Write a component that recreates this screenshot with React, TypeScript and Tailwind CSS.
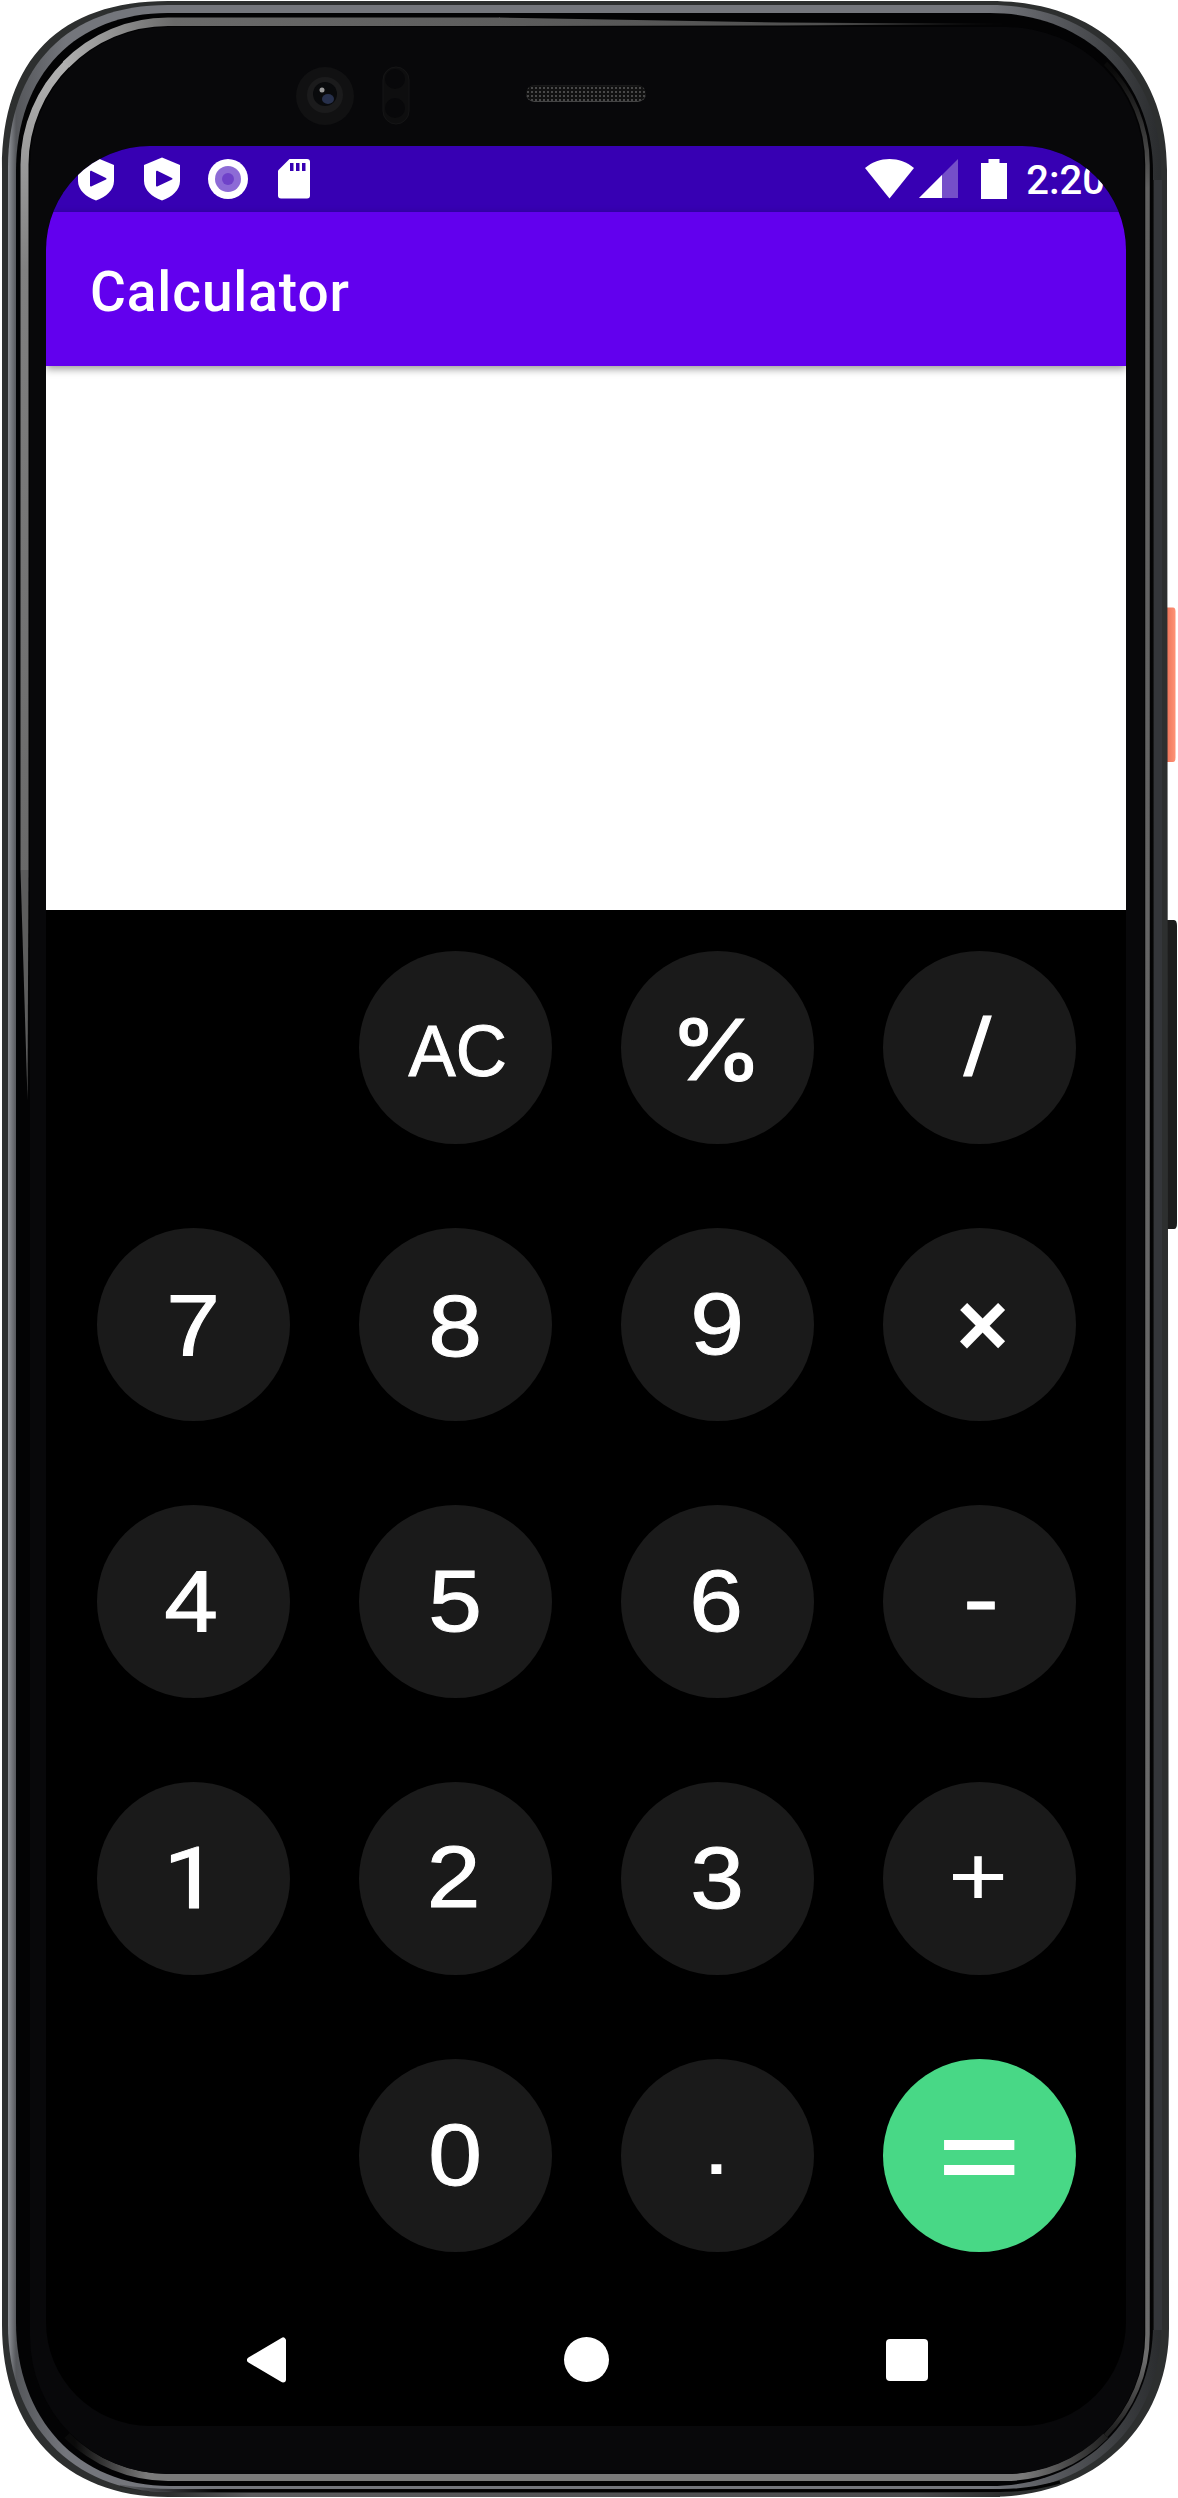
type Key = { label: string; look: string; green?: boolean };

const digit = "text-[87px] scale-x-[1.11] [-webkit-text-stroke:1px_white]";

const keys: (Key | null)[] = [
  null,
  { label: "AC", look: "text-[73px] scale-x-[0.97] translate-x-[2px] translate-y-[3px] [-webkit-text-stroke:1px_white]" },
  { label: "%", look: "font-['Inter'] text-[84px] scale-x-[1.14] translate-x-[-1px] translate-y-[2px] [-webkit-text-stroke:1px_white]" },
  { label: "/", look: "text-[82px] scale-x-[1.2] translate-x-[-2px] translate-y-[-1px] [-webkit-text-stroke:1px_white]" },
  { label: "7", look: `${digit} translate-y-[1px]` },
  { label: "8", look: `${digit} translate-y-[1px]` },
  { label: "9", look: `${digit} translate-y-[-1px]` },
  { label: "×", look: "text-[90px] font-bold translate-x-[3px]" },
  { label: "4", look: `${digit} translate-x-[-2px]` },
  { label: "5", look: `${digit} translate-y-[-1.5px]` },
  { label: "6", look: `${digit} translate-x-[-1px] translate-y-[-1.5px]` },
  { label: "-", look: "text-[90px] scale-x-[1.2] translate-x-[1px] translate-y-[-3px] [-webkit-text-stroke:1px_white]" },
  { label: "1", look: "font-['Roboto'] text-[86px] scale-x-[1.15] translate-x-[-2px] [-webkit-text-stroke:1px_white]" },
  { label: "2", look: `${digit} translate-x-[-1.5px] translate-y-[-2px]` },
  { label: "3", look: `${digit} translate-y-[-1.5px]` },
  { label: "+", look: "text-[100px] scale-x-[1.03] scale-y-[0.85] translate-x-[-1px] translate-y-[-3px]" },
  null,
  { label: "0", look: `${digit} translate-y-[-1px]` },
  { label: ".", look: "text-[90px] scale-x-[1.15] translate-x-[-1px] translate-y-[-13px]" },
  { label: "=", look: "text-[100px] scale-x-[1.4] scale-y-[0.93] translate-y-[-1px] font-bold", green: true },
];

function Shield() {
  return (
    <svg className="h-[44px] w-[36px]" viewBox="0 0 36 44" aria-hidden="true">
      <path d="M18 0.500 36 8v16c0 9-8 16-18 19.500C8 40 0 33 0 24V8Z" fill="#fff" />
      <path d="M12 15v13.500c0 1 1 1.300 1.700.8L28 22.500c.7-.5.7-1 0-1.500L13.700 14c-.7-.4-1.700 0-1.700 1Z" fill="#3700b3" />
    </svg>
  );
}

function StatusBar() {
  return (
    <div className="flex h-[66px] shrink-0 items-start justify-between bg-[#3700b3]">
      <div className="flex items-start pl-8 pt-[11px]">
        <Shield />
        <div className="w-[30px]" />
        <Shield />
        <svg className="ml-[28px] mt-[2px] size-[40px]" viewBox="0 0 40 40" aria-hidden="true">
          <circle cx="20" cy="20" r="20" fill="#fff" />
          <circle cx="20" cy="20" r="13" fill="#8d6bd6" />
          <circle cx="20" cy="20" r="6" fill="#6f42c9" />
        </svg>
        <svg className="ml-[30px] mt-[2px] h-[40px] w-[32px]" viewBox="0 0 32 40" aria-hidden="true">
          <path d="M11.500 0H29a3 3 0 0 1 3 3v33.500a3 3 0 0 1-3 3H3a3 3 0 0 1-3-3V11.500Z" fill="#fff" />
          <path d="M12 4h3.500v8H12zM18 4h3.500v8H18zM24 4h3.500v8H24z" fill="#3700b3" />
        </svg>
      </div>
      <div className="flex items-start pr-[21px] pt-[13px]">
        <svg className="h-[40px] w-[49px]" viewBox="0 0 49 40" aria-hidden="true">
          <path d="M0 9C14-3 35-3 49 9L24.500 39.500Z" fill="#fff" />
        </svg>
        <svg className="ml-[5px] h-[39px] w-[39px]" viewBox="0 0 39 39" aria-hidden="true">
          <path d="M39 0v39H0Z" fill="#754fc9" />
          <path d="M23 16v23H0Z" fill="#fff" />
        </svg>
        <svg className="ml-[23px] h-[40px] w-[26px]" viewBox="0 0 26 40" aria-hidden="true">
          <path d="M7.500 0h11v4H26v36H0V4h7.500Z" fill="#fff" />
        </svg>
        <span className="ml-[19px] mt-[1px] font-['Roboto'] text-[40px] leading-[42px] font-medium text-white">2:20</span>
      </div>
    </div>
  );
}

function NavBar() {
  return (
    <div className="mt-auto flex h-[132px] items-center justify-between pr-[198px] pb-px pl-[201px]">
      <svg className="h-[46px] w-[40px]" viewBox="0 0 40 46" aria-hidden="true">
        <path d="M3 23 36 3.500V42.500Z" fill="#fff" stroke="#fff" strokeWidth="6" strokeLinejoin="round" />
      </svg>
      <div className="size-[45px] rounded-full bg-white" />
      <div className="size-[42px] rounded-[4px] bg-white" />
    </div>
  );
}

/* Metal rails and glass reflections around the display */
function Chassis() {
  return (
    <svg className="absolute inset-0 h-full w-full" viewBox="0 0 1178 2498" fill="none" aria-hidden="true">
      <defs>
        <linearGradient id="power" x1="0" y1="0" x2="1" y2="0">
          <stop offset="0" stopColor="#d96a50" />
          <stop offset="0.300" stopColor="#f07a5f" />
          <stop offset="1" stopColor="#ff9377" />
        </linearGradient>
        <linearGradient id="rail" x1="0" y1="0" x2="1" y2="0">
          <stop offset="0" stopColor="#909399" />
          <stop offset="0.007" stopColor="#55575b" />
          <stop offset="0.050" stopColor="#74767c" />
          <stop offset="0.850" stopColor="#74767c" />
          <stop offset="1" stopColor="#2a2c2e" />
        </linearGradient>
        <linearGradient id="topSheen" x1="60" y1="0" x2="1010" y2="0" gradientUnits="userSpaceOnUse">
          <stop offset="0" stopColor="#b2b2b2" />
          <stop offset="0.120" stopColor="#6a6a6a" />
          <stop offset="0.800" stopColor="#505050" />
          <stop offset="1" stopColor="#0a0a0a" />
        </linearGradient>
        <linearGradient id="leftSheen" x1="0" y1="60" x2="0" y2="900" gradientUnits="userSpaceOnUse">
          <stop offset="0" stopColor="#b2b2b2" />
          <stop offset="0.250" stopColor="#808080" />
          <stop offset="1" stopColor="#686868" />
        </linearGradient>
        <linearGradient id="rightSheen" x1="0" y1="70" x2="0" y2="2430" gradientUnits="userSpaceOnUse">
          <stop offset="0" stopColor="#0a0a0a" />
          <stop offset="0.050" stopColor="#606060" />
          <stop offset="0.970" stopColor="#6c6c6c" />
          <stop offset="1" stopColor="#222" />
        </linearGradient>
        <linearGradient id="bottomSheen" x1="75" y1="0" x2="1105" y2="0" gradientUnits="userSpaceOnUse">
          <stop offset="0" stopColor="#0a0a0a" />
          <stop offset="0.070" stopColor="#7a7a7a" />
          <stop offset="0.920" stopColor="#7a7a7a" />
          <stop offset="1" stopColor="#222" />
        </linearGradient>
        <linearGradient id="bottomBlack" x1="100" y1="0" x2="1080" y2="0" gradientUnits="userSpaceOnUse">
          <stop offset="0" stopColor="#020202" stopOpacity="0" />
          <stop offset="0.120" stopColor="#020202" />
          <stop offset="1" stopColor="#020202" />
        </linearGradient>
        <linearGradient id="bottomEdge" x1="168" y1="0" x2="1000" y2="0" gradientUnits="userSpaceOnUse">
          <stop offset="0" stopColor="#2d2f2f" />
          <stop offset="0.100" stopColor="#5c5c5e" />
          <stop offset="0.900" stopColor="#4a4a4c" />
          <stop offset="1" stopColor="#2d2f2f" />
        </linearGradient>
      </defs>
      <path d="M1165 607.500h8q2.500 0 2.500 4v146q0 4.500-2.500 4.500h-8Z" fill="url(#power)" />
      <path d="M1165 920h9q3 0 3 6v297q0 6-3 6h-9Z" fill="#1c1c1c" />
      <path
        d="M168 1H990C1098 1 1167 66 1167 170L1169 2328C1169 2424 1098 2497 990 2497H168C64 2497 2 2429 2 2325V168C2 60 60 1 168 1Z"
        fill="#2d2f2f"
      />
      <path
        d="M168 5H990C1093 5 1161 74 1161 170V2328C1161 2420 1094 2492 990 2492H168C72 2492 8 2423 8 2325V168C8 66 68 5 168 5Z"
        fill="url(#rail)"
      />
      <path
        d="M168 13H990C1086 13 1153 80 1153 172V2325C1153 2412 1090 2486 990 2486H170C78 2486 16 2419 16 2322V172C16 74 76 13 168 13Z"
        fill="#030304"
      />
      <path d="M24.500 870V164.500A143 143 0 0 1 67 63.500" stroke="url(#leftSheen)" strokeWidth="8" />
      <path d="M20.500 870H28.500L27.500 1100Z" fill="#5c5c5c" />
      <path d="M66 64.500A143 143 0 0 1 168 21.700H500" stroke="url(#topSheen)" strokeWidth="8.500" />
      <path d="M499 17.500 780 22.500 1010 24 780 25.500 499 26Z" fill="url(#topSheen)" />
      <path d="M1105.600 63.400A143 143 0 0 1 1147.500 164.500V2334.500A143 143 0 0 1 1105.600 2435.600" stroke="url(#rightSheen)" strokeWidth="4.500" />
      <path d="M1152.500 180V2330" stroke="#050505" strokeWidth="2" />
      <path d="M1158 180V2330" stroke="#34363a" strokeWidth="8" />
      <path d="M67 2435.600A143 143 0 0 0 168 2477.500H1004.500A143 143 0 0 0 1105.600 2435.600" stroke="url(#bottomSheen)" strokeWidth="7" />
      <path d="M120 2486Q145 2490.500 175 2490.500H1000Q1030 2490.500 1060 2482" stroke="url(#bottomBlack)" strokeWidth="3" />
      <path d="M168 2495H1000" stroke="url(#bottomEdge)" strokeWidth="4" />
      <rect x="30" y="27" width="1114" height="2447" rx="138" fill="#08080a" />
      <circle cx="325" cy="96" r="29" fill="#111112" />
      <circle cx="325" cy="95" r="18" fill="#1b1b1c" />
      <circle cx="325" cy="94" r="12" fill="#090a0c" />
      <ellipse cx="328" cy="99" rx="6" ry="5" fill="#27304c" />
      <circle cx="322" cy="90" r="2.500" fill="#9a9a9a" />
      <rect x="383" y="67" width="26" height="57" rx="13" fill="#0e0e0f" stroke="#151516" />
      <circle cx="395" cy="79" r="10" fill="#08080a" />
      <circle cx="395" cy="108" r="10" fill="#08080a" />
    </svg>
  );
}

export default function App() {
  return (
    <div className="relative h-[2498px] w-[1178px] overflow-hidden bg-white pt-[146px] pl-[46px] font-['Liberation_Sans',sans-serif]">
      <Chassis />
      <div className="absolute top-[85px] left-[526px] h-[17px] w-[120px] rounded-full border-t border-b border-t-[#191919] border-b-[#444] bg-[#111] bg-[radial-gradient(#484848_0.8px,transparent_1.2px)] bg-[size:4px_4px]" />
      <main className="relative flex h-[2280px] w-[1080px] flex-col overflow-hidden rounded-[104px] bg-black">
        <StatusBar />
        <header className="z-10 flex h-[154px] shrink-0 items-center bg-[#6200ee] pt-[6px] pl-[44px] shadow-[0_3px_8px_rgba(0,0,0,0.4)]">
          <h1 className="font-['Roboto'] text-[55px] leading-none font-medium tracking-[0.9px] text-white">Calculator</h1>
        </header>
        <section className="h-[544px] shrink-0 bg-white" />
        <section className="grid grid-cols-[repeat(4,193px)] gap-x-[69px] gap-y-[84px] pt-[41px] pl-[51px]">
          {keys.map((key, i) =>
            key ? (
              <button
                key={i}
                className={`flex size-[193px] items-center justify-center rounded-full leading-none text-white ${key.green ? "bg-[#48d886]" : "bg-[#1a1a1a]"}`}
              >
                <span className={`block ${key.look}`}>{key.label}</span>
              </button>
            ) : (
              <div key={i} />
            ),
          )}
        </section>
        <NavBar />
      </main>
    </div>
  );
}
